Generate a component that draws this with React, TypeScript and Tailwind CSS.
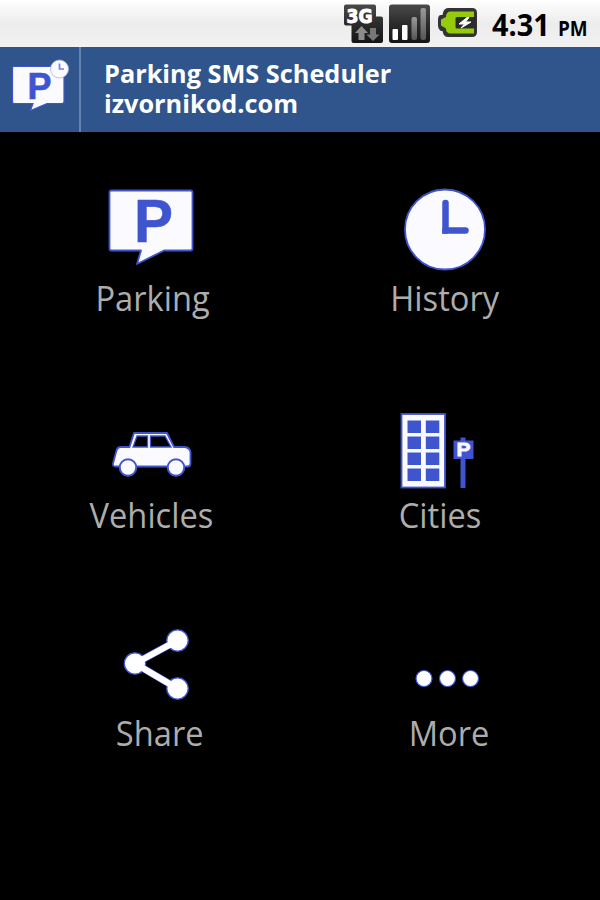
import type { ReactNode } from 'react';

const BLUE = '#3f55d0';
const WHITE = '#fafaff';

function StatusBar() {
  return (
    <div className="flex h-[47px] items-start bg-linear-to-b from-[#ffffff] via-[#ececec] to-[#f2f2f2]">
      <svg className="ml-[340px] shrink-0" width="140" height="47" viewBox="340 0 140 47">
        <defs>
          <linearGradient id="dark" x1="0" y1="0" x2="0" y2="1">
            <stop offset="0" stopColor="#4a4a4a" />
            <stop offset="0.5" stopColor="#2b2b2b" />
            <stop offset="1" stopColor="#151515" />
          </linearGradient>
          <linearGradient id="bar" x1="0" y1="0" x2="0" y2="1">
            <stop offset="0" stopColor="#9a9a9a" />
            <stop offset="1" stopColor="#555555" />
          </linearGradient>
        </defs>

        {/* 3G */}
        <path
          d="M346 4.500H374Q376 4.500 376 6.500V16.500H381Q383 16.500 383 18.500V41Q383 43 381 43H353.500Q351.500 43 351.500 41V25.500H346Q344 25.500 344 23.500V6.500Q344 4.500 346 4.500Z"
          fill="url(#dark)"
        />
        <text
          x="346.500"
          y="22.500"
          textLength="26"
          lengthAdjust="spacingAndGlyphs"
          fill="#ffffff"
          stroke="#ffffff"
          strokeWidth="1"
          fontFamily="DejaVu Sans, sans-serif"
          fontSize="19.500"
          fontWeight="700"
        >
          3G
        </text>
        <path d="M361.500 26L368 33H364.500V40H358.500V33H355Z" fill="#8c8c8c" />
        <path d="M373 41L379.500 34.500H376V28H370V34.500H366.500Z" fill="#777777" />

        {/* Signal */}
        <rect x="389" y="4.500" width="41" height="38.500" rx="3" fill="url(#dark)" />
        <rect x="392.500" y="29" width="5.500" height="11" rx="1" fill="#ffffff" />
        <rect x="402" y="25" width="5.500" height="15" rx="1" fill="#ffffff" />
        <rect x="411.500" y="17" width="5.500" height="23" rx="2" fill="url(#bar)" />
        <rect x="420.500" y="8" width="5.500" height="32" rx="2" fill="url(#bar)" />

        {/* Battery */}
        <path
          d="M448 8H472Q477 8 477 13V32Q477 37 472 37H448Q443.500 37 442.500 31H441Q438 29 438 25V20Q438 15 441 15H442.500Q443.500 8 448 8Z"
          fill="#333333"
        />
        <path
          d="M450 11.500H474V33.500H450Q446 33 446 28.500L441 25.500V19.500L446 17Q446 12 450 11.500Z"
          fill="#94cc0b"
        />
        <path d="M457 17H476V28.500H457Q455.500 28.500 455.500 27V18.500Q455.500 17 457 17Z" fill="#2c2c2c" />
        <path d="M467 17.500L459 24H464.500L461 28L471 22H465.500L469 17.500Z" fill="#ffffff" stroke="#ffffff" />
      </svg>
      <div className="ml-[12px] flex items-baseline whitespace-nowrap text-black">
        <div className="w-[66px]">
          <span className="inline-block origin-left scale-x-[0.93] text-[31px] leading-[49px] font-bold">4:31</span>
        </div>
        <span className="inline-block origin-left scale-x-[0.9] text-[21px] font-bold">PM</span>
      </div>
    </div>
  );
}

function Header() {
  return (
    <div className="flex h-[84.500px] bg-[#2f558c] text-white">
      <div className="w-[81px] shrink-0 border-r-2 border-[#6283b2]">
        <svg width="79" height="84" viewBox="0 47 79 84">
          <path
            d="M14 66.500H62Q64 66.500 64 68.500V101.500Q64 103.500 62 103.500H47L30.500 110.500L33 103.500H14Q12.500 103.500 12.500 101.500V68.500Q12.500 66.500 14 66.500Z"
            fill={WHITE}
            stroke={BLUE}
            strokeWidth="1.200"
          />
          <text
            x="27.500"
            y="98.500"
            textLength="24"
            lengthAdjust="spacingAndGlyphs"
            fill={BLUE}
            stroke={BLUE}
            strokeWidth="0.600"
            fontFamily="Liberation Sans, sans-serif"
            fontSize="37"
            fontWeight="700"
          >
            P
          </text>
          <circle cx="59.500" cy="69" r="9" fill={WHITE} stroke="#a9b4dc" strokeWidth="0.800" />
          <path d="M59.500 63.500V69H64" fill="none" stroke="#7483d8" strokeWidth="1.700" />
        </svg>
      </div>
      <div className="ml-[23px] origin-left scale-x-[1.012] pt-[11px] text-[25px] leading-[30px] font-bold whitespace-nowrap">
        Parking SMS Scheduler
        <br />
        izvornikod.com
      </div>
    </div>
  );
}

function MenuItem({ label, icon }: { label: string; icon: ReactNode }) {
  return (
    <div className="flex flex-col items-center">
      {icon}
      <div className="scale-x-[0.96] pt-[1.500px] text-[34px] leading-[44px] whitespace-nowrap text-[#adadad]">
        {label}
      </div>
    </div>
  );
}

function ParkingIcon() {
  return (
    <svg width="120" height="94" viewBox="92 180 120 94">
      <path
        d="M111.500 190.500H190.500Q192.500 190.500 192.500 192.500V248.500Q192.500 250.500 190.500 250.500H164L137 264L141 250.500H111.500Q109.500 250.500 109.500 248.500V192.500Q109.500 190.500 111.500 190.500Z"
        fill={WHITE}
        stroke={BLUE}
        strokeWidth="1.800"
        strokeLinejoin="round"
      />
      <text
        x="134"
        y="241.500"
        textLength="39"
        lengthAdjust="spacingAndGlyphs"
        fill={BLUE}
        stroke={BLUE}
        strokeWidth="0.500"
        fontFamily="Liberation Sans, sans-serif"
        fontSize="61"
        fontWeight="700"
      >
        P
      </text>
    </svg>
  );
}

function HistoryIcon() {
  return (
    <svg width="120" height="94" viewBox="385 180 120 94">
      <circle cx="445" cy="229.500" r="40" fill={WHITE} stroke={BLUE} strokeWidth="1.800" />
      <path d="M445.500 203V230.500H465.500" fill="none" stroke={BLUE} strokeWidth="6.500" strokeLinecap="round" />
      <path d="M442.300 228H448V233.700H442.300Z" fill={BLUE} />
    </svg>
  );
}

function VehiclesIcon() {
  return (
    <svg width="120" height="94" viewBox="91.500 397.500 120 94">
      <path
        d="M133.500 432.500H166.500L173.500 446.500H184Q189.500 447 190 452V463Q190 466 187 466H115Q112 466 112.500 463L116 450Q117 446.500 120 446.500H129Z"
        fill={WHITE}
        stroke={BLUE}
        strokeWidth="1.800"
        strokeLinejoin="round"
      />
      <path d="M136.500 435.500H147V446.500H132.500ZM150 435.500H164.500L170.500 446.500H150Z" fill="#000000" stroke={BLUE} strokeWidth="1.300" />
      <circle cx="127.500" cy="467" r="8.300" fill={WHITE} stroke={BLUE} strokeWidth="2" />
      <circle cx="175.500" cy="467" r="8.300" fill={WHITE} stroke={BLUE} strokeWidth="2" />
    </svg>
  );
}

function CitiesIcon() {
  return (
    <svg width="120" height="94" viewBox="380 397.500 120 94">
      <rect x="401.500" y="413.500" width="43.500" height="73.500" fill={WHITE} stroke={BLUE} strokeWidth="1.800" />
      {[420, 436, 452, 468].map((y) => (
        <g key={y} fill={BLUE}>
          <rect x="407.500" y={y} width="13.500" height="12.500" />
          <rect x="425.800" y={y} width="13.500" height="12.500" />
        </g>
      ))}
      <rect x="460.500" y="437" width="5" height="50.500" fill={BLUE} />
      <rect x="453.500" y="440" width="20" height="18.500" fill={BLUE} />
      <text
        x="456.500"
        y="455.500"
        textLength="14"
        lengthAdjust="spacingAndGlyphs"
        fill={WHITE}
        stroke={WHITE}
        strokeWidth="0.800"
        fontFamily="Liberation Sans, sans-serif"
        fontSize="19"
        fontWeight="700"
      >
        P
      </text>
    </svg>
  );
}

function ShareIcon() {
  return (
    <svg width="120" height="94" viewBox="100 615 120 94">
      <path d="M177.500 640.500L135 663.500L177.500 688.500" fill="none" stroke={BLUE} strokeWidth="7.500" />
      <g fill="#ffffff" stroke={BLUE} strokeWidth="1.300">
        <circle cx="177.500" cy="640.500" r="10.700" />
        <circle cx="135" cy="663.500" r="10.700" />
        <circle cx="177.500" cy="688.500" r="10.700" />
      </g>
      <path d="M177.500 640.500L135 663.500L177.500 688.500" fill="none" stroke="#ffffff" strokeWidth="6.200" />
    </svg>
  );
}

function MoreIcon() {
  return (
    <svg width="120" height="94" viewBox="389 615 120 94">
      <g fill="#ffffff" stroke={BLUE} strokeWidth="1.200">
        <circle cx="424" cy="678.500" r="8" />
        <circle cx="447.500" cy="678.500" r="8" />
        <circle cx="470.500" cy="678.500" r="8" />
      </g>
    </svg>
  );
}

export default function App() {
  return (
    <div className="h-[900px] w-[600px] overflow-hidden bg-black font-['Open_Sans','Noto_Sans',sans-serif]">
      <StatusBar />
      <Header />
      <div className="pt-[48.500px]">
        <div className="grid h-[217.500px] grid-cols-[304px_282px]">
          <MenuItem label="Parking" icon={<ParkingIcon />} />
          <MenuItem label="History" icon={<HistoryIcon />} />
        </div>
        <div className="grid h-[217.500px] grid-cols-[303px_274px]">
          <MenuItem label="Vehicles" icon={<VehiclesIcon />} />
          <MenuItem label="Cities" icon={<CitiesIcon />} />
        </div>
        <div className="grid h-[217.500px] grid-cols-[320px_258px]">
          <MenuItem label="Share" icon={<ShareIcon />} />
          <MenuItem label="More" icon={<MoreIcon />} />
        </div>
      </div>
    </div>
  );
}
